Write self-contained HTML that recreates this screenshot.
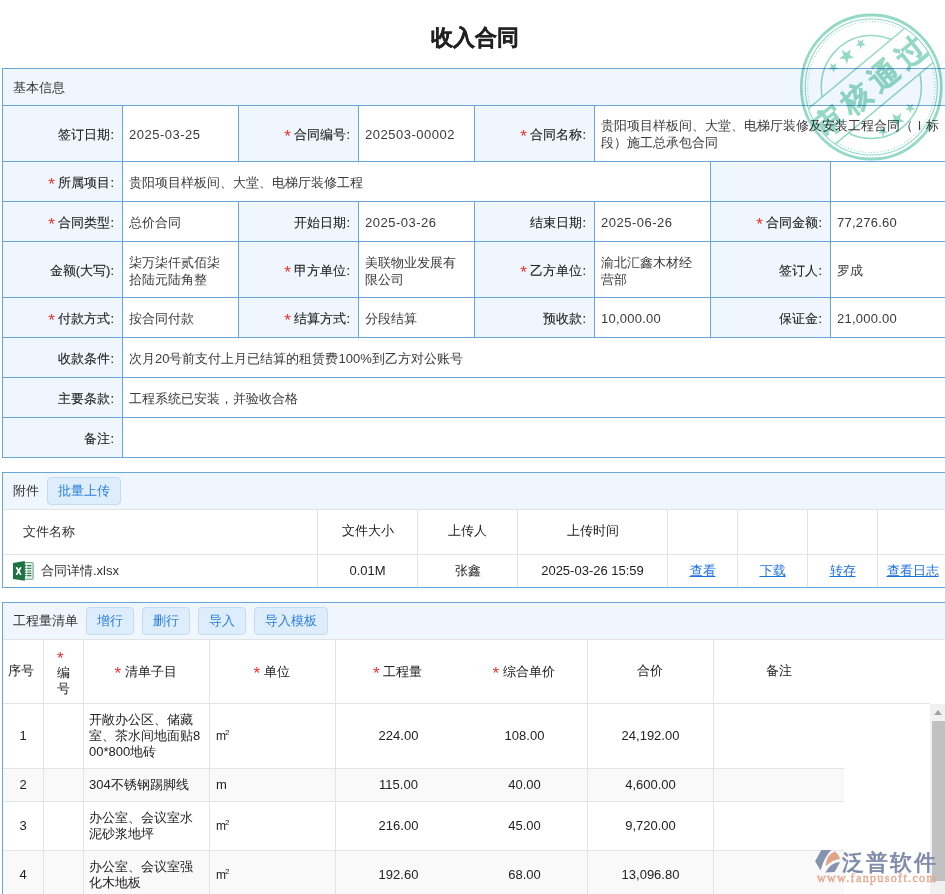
<!DOCTYPE html>
<html><head><meta charset="utf-8">
<style>
*{margin:0;padding:0;box-sizing:border-box}
html,body{width:945px;height:894px;overflow:hidden;background:#fff}
body{position:relative;font-family:"Liberation Sans",sans-serif;font-size:13px;color:#333}
.a{position:absolute;white-space:nowrap}
.hl{position:absolute;height:1px;background:#66a6d9}
.vl{position:absolute;width:1px;background:#66a6d9}
.gh{position:absolute;height:1px;background:#e3e3e3}
.gv{position:absolute;width:1px;background:#e3e3e3}
.bg{position:absolute;background:#eff6fe}
.lb{position:absolute;text-align:right;color:#222;-webkit-text-stroke:0.1px #222;line-height:17px;white-space:nowrap}
.vv{position:absolute;color:#3a3a3a;line-height:17px;white-space:nowrap}
.r{color:#f03030;-webkit-text-stroke:0;font-size:17px;position:relative;top:3px;line-height:10px}
.btn{position:absolute;height:28px;border:1px solid #c3dcf2;background:#deedfb;border-radius:4px;color:#2d7fdc;line-height:25px;text-align:center}
.th{position:absolute;text-align:center;color:#222;line-height:16px;white-space:nowrap}
.td{position:absolute;color:#222;line-height:16px;white-space:nowrap}
a{color:#1d6fdc;text-decoration:underline}
</style></head><body>

<div class="a" style="left:0;width:949px;top:23px;text-align:center;font-size:22px;font-weight:bold;color:#222;line-height:30px;-webkit-text-stroke:0.3px #222">收入合同</div>

<!-- PANEL 1 -->
<div class="bg" style="left:2px;top:68px;width:960px;height:390px;background:#fff"></div>
<div class="bg" style="left:3px;top:69px;width:960px;height:36px"></div>
<div class="bg" style="left:3px;top:106px;width:119px;height:351px"></div>
<div class="bg" style="left:239px;top:106px;width:119px;height:55px"></div>
<div class="bg" style="left:475px;top:106px;width:119px;height:55px"></div>
<div class="bg" style="left:711px;top:162px;width:119px;height:39px"></div>
<div class="bg" style="left:239px;top:202px;width:119px;height:136px"></div>
<div class="bg" style="left:475px;top:202px;width:119px;height:136px"></div>
<div class="bg" style="left:711px;top:202px;width:119px;height:136px"></div>

<div class="hl" style="left:2px;top:68px;width:960px"></div>
<div class="hl" style="left:2px;top:105px;width:960px"></div>
<div class="hl" style="left:2px;top:161px;width:960px"></div>
<div class="hl" style="left:2px;top:201px;width:960px"></div>
<div class="hl" style="left:2px;top:241px;width:960px"></div>
<div class="hl" style="left:2px;top:297px;width:960px"></div>
<div class="hl" style="left:2px;top:337px;width:960px"></div>
<div class="hl" style="left:2px;top:377px;width:960px"></div>
<div class="hl" style="left:2px;top:417px;width:960px"></div>
<div class="hl" style="left:2px;top:457px;width:960px"></div>
<div class="vl" style="left:2px;top:68px;height:390px"></div>
<div class="vl" style="left:122px;top:105px;height:352px"></div>
<div class="vl" style="left:238px;top:105px;height:56px"></div>
<div class="vl" style="left:358px;top:105px;height:56px"></div>
<div class="vl" style="left:474px;top:105px;height:56px"></div>
<div class="vl" style="left:594px;top:105px;height:56px"></div>
<div class="vl" style="left:710px;top:161px;height:40px"></div>
<div class="vl" style="left:830px;top:161px;height:40px"></div>
<div class="vl" style="left:238px;top:201px;height:136px"></div>
<div class="vl" style="left:358px;top:201px;height:136px"></div>
<div class="vl" style="left:474px;top:201px;height:136px"></div>
<div class="vl" style="left:594px;top:201px;height:136px"></div>
<div class="vl" style="left:710px;top:201px;height:136px"></div>
<div class="vl" style="left:830px;top:201px;height:136px"></div>

<div class="a" style="left:13px;top:79px;line-height:17px">基本信息</div>

<!-- row1 -->
<div class="lb" style="left:3px;width:111px;top:126px">签订日期:</div>
<div class="vv" style="left:129px;top:126px;letter-spacing:0.5px">2025-03-25</div>
<div class="lb" style="left:239px;width:111px;top:126px"><span class="r">*</span> 合同编号:</div>
<div class="vv" style="left:365px;top:126px;letter-spacing:0.5px">202503-00002</div>
<div class="lb" style="left:475px;width:111px;top:126px"><span class="r">*</span> 合同名称:</div>
<div class="vv" style="left:601px;top:117px">贵阳项目样板间、大堂、电梯厅装修及安装工程合同（Ｉ标<br>段）施工总承包合同</div>
<!-- row2 -->
<div class="lb" style="left:3px;width:111px;top:174px"><span class="r">*</span> 所属项目:</div>
<div class="vv" style="left:129px;top:174px">贵阳项目样板间、大堂、电梯厅装修工程</div>
<!-- row3 -->
<div class="lb" style="left:3px;width:111px;top:214px"><span class="r">*</span> 合同类型:</div>
<div class="vv" style="left:129px;top:214px">总价合同</div>
<div class="lb" style="left:239px;width:111px;top:214px">开始日期:</div>
<div class="vv" style="left:365px;top:214px;letter-spacing:0.5px">2025-03-26</div>
<div class="lb" style="left:475px;width:111px;top:214px">结束日期:</div>
<div class="vv" style="left:601px;top:214px;letter-spacing:0.5px">2025-06-26</div>
<div class="lb" style="left:711px;width:111px;top:214px"><span class="r">*</span> 合同金额:</div>
<div class="vv" style="left:837px;top:214px;letter-spacing:0.25px">77,276.60</div>
<!-- row4 -->
<div class="lb" style="left:3px;width:111px;top:262px">金额(大写):</div>
<div class="vv" style="left:129px;top:254px">柒万柒仟贰佰柒<br>拾陆元陆角整</div>
<div class="lb" style="left:239px;width:111px;top:262px"><span class="r">*</span> 甲方单位:</div>
<div class="vv" style="left:365px;top:254px">美联物业发展有<br>限公司</div>
<div class="lb" style="left:475px;width:111px;top:262px"><span class="r">*</span> 乙方单位:</div>
<div class="vv" style="left:601px;top:254px">渝北汇鑫木材经<br>营部</div>
<div class="lb" style="left:711px;width:111px;top:262px">签订人:</div>
<div class="vv" style="left:837px;top:262px">罗成</div>
<!-- row5 -->
<div class="lb" style="left:3px;width:111px;top:310px"><span class="r">*</span> 付款方式:</div>
<div class="vv" style="left:129px;top:310px">按合同付款</div>
<div class="lb" style="left:239px;width:111px;top:310px"><span class="r">*</span> 结算方式:</div>
<div class="vv" style="left:365px;top:310px">分段结算</div>
<div class="lb" style="left:475px;width:111px;top:310px">预收款:</div>
<div class="vv" style="left:601px;top:310px;letter-spacing:0.25px">10,000.00</div>
<div class="lb" style="left:711px;width:111px;top:310px">保证金:</div>
<div class="vv" style="left:837px;top:310px;letter-spacing:0.25px">21,000.00</div>
<!-- row6-8 -->
<div class="lb" style="left:3px;width:111px;top:350px">收款条件:</div>
<div class="vv" style="left:129px;top:350px">次月20号前支付上月已结算的租赁费100%到乙方对公账号</div>
<div class="lb" style="left:3px;width:111px;top:390px">主要条款:</div>
<div class="vv" style="left:129px;top:390px">工程系统已安装，并验收合格</div>
<div class="lb" style="left:3px;width:111px;top:430px">备注:</div>

<!-- PANEL 2 -->
<div class="bg" style="left:3px;top:473px;width:960px;height:36px"></div>
<div class="gh" style="left:3px;top:509px;width:960px"></div>
<div class="gh" style="left:3px;top:554px;width:960px"></div>
<div class="hl" style="left:2px;top:472px;width:960px"></div>
<div class="hl" style="left:2px;top:587px;width:960px"></div>
<div class="vl" style="left:2px;top:472px;height:116px"></div>
<div class="gv" style="left:317px;top:510px;height:77px"></div>
<div class="gv" style="left:417px;top:510px;height:77px"></div>
<div class="gv" style="left:517px;top:510px;height:77px"></div>
<div class="gv" style="left:667px;top:510px;height:77px"></div>
<div class="gv" style="left:737px;top:510px;height:77px"></div>
<div class="gv" style="left:807px;top:510px;height:77px"></div>
<div class="gv" style="left:877px;top:510px;height:77px"></div>
<div class="a" style="left:13px;top:482px;line-height:17px">附件</div>
<div class="btn" style="left:47px;top:477px;width:74px">批量上传</div>
<div class="a" style="left:23px;top:523px;line-height:17px">文件名称</div>
<div class="th" style="left:318px;width:99px;top:523px">文件大小</div>
<div class="th" style="left:418px;width:99px;top:523px">上传人</div>
<div class="th" style="left:518px;width:149px;top:523px">上传时间</div>
<svg class="a" style="left:13px;top:561px" width="21" height="21" viewBox="0 0 21 21">
<rect x="11.5" y="1.6" width="8.6" height="16.6" rx="0.6" fill="#e8f1eb" stroke="#4f9a6e" stroke-width="0.9"/>
<path d="M12 4.6h6.3M12 7.4h6.3M12 10h6.3M12 12.3h6.3M12 14.6h6.3" stroke="#2f7d50" stroke-width="1.2"/>
<path d="M13.7 2.5v15" stroke="#fff" stroke-width="0.9"/>
<path d="M0 1.9L11.8 0V19.8L0 18Z" fill="#1f7244"/>
<path d="M3.4 6.2L7.9 13.9M7.9 6.2L3.4 13.9" stroke="#fff" stroke-width="1.7" fill="none"/>
</svg>
<div class="a" style="left:41px;top:562px;line-height:17px;color:#333">合同详情.xlsx</div>
<div class="th" style="left:318px;width:99px;top:563px">0.01M</div>
<div class="th" style="left:418px;width:99px;top:563px">张鑫</div>
<div class="th" style="left:518px;width:149px;top:563px">2025-03-26 15:59</div>
<div class="th" style="left:668px;width:69px;top:563px"><a>查看</a></div>
<div class="th" style="left:738px;width:69px;top:563px"><a>下载</a></div>
<div class="th" style="left:808px;width:69px;top:563px"><a>转存</a></div>
<div class="th" style="left:878px;width:69px;top:563px"><a>查看日志</a></div>

<!-- PANEL 3 -->
<div class="bg" style="left:3px;top:603px;width:960px;height:36px"></div>
<div class="hl" style="left:2px;top:602px;width:960px"></div>
<div class="gh" style="left:3px;top:639px;width:960px"></div>
<div class="vl" style="left:2px;top:602px;height:300px"></div>
<div class="a" style="left:13px;top:612px;line-height:17px">工程量清单</div>
<div class="btn" style="left:86px;top:607px;width:48px">增行</div>
<div class="btn" style="left:142px;top:607px;width:48px">删行</div>
<div class="btn" style="left:198px;top:607px;width:48px">导入</div>
<div class="btn" style="left:254px;top:607px;width:74px">导入模板</div>

<!-- table3 -->
<div class="gh" style="left:3px;top:703px;width:927px"></div>
<div class="bg" style="left:3px;top:769px;width:841px;height:32px;background:#f9f9f9"></div>
<div class="bg" style="left:3px;top:851px;width:841px;height:50px;background:#f9f9f9"></div>
<div class="gh" style="left:3px;top:768px;width:841px"></div>
<div class="gh" style="left:3px;top:801px;width:841px"></div>
<div class="gh" style="left:3px;top:850px;width:841px"></div>
<div class="gv" style="left:43px;top:640px;height:260px"></div>
<div class="gv" style="left:83px;top:640px;height:260px"></div>
<div class="gv" style="left:209px;top:640px;height:260px"></div>
<div class="gv" style="left:335px;top:640px;height:260px"></div>
<div class="gv" style="left:587px;top:640px;height:260px"></div>
<div class="gv" style="left:713px;top:640px;height:260px"></div>

<div class="th" style="left:1px;width:40px;top:663px">序号</div>
<div class="td" style="left:57px;top:649px;line-height:16px"><span class="r" style="top:3px">*</span><br>编<br>号</div>
<div class="th" style="left:83px;width:125px;top:664px"><span class="r">*</span> 清单子目</div>
<div class="th" style="left:209px;width:125px;top:664px"><span class="r">*</span> 单位</div>
<div class="th" style="left:335px;width:125px;top:664px"><span class="r">*</span> 工程量</div>
<div class="th" style="left:461px;width:125px;top:664px"><span class="r">*</span> 综合单价</div>
<div class="th" style="left:587px;width:125px;top:663px">合价</div>
<div class="th" style="left:714px;width:130px;top:663px">备注</div>

<!-- rows -->
<div class="th" style="left:3px;width:40px;top:728px">1</div>
<div class="td" style="left:89px;top:712px">开敞办公区、储藏<br>室、茶水间地面贴8<br>00*800地砖</div>
<div class="td" style="left:216px;top:728px"><span style="font-size:12px">m</span><span style="font-size:8px;position:relative;top:-5px;left:-1px">2</span></div>
<div class="th" style="left:336px;width:125px;top:728px">224.00</div>
<div class="th" style="left:462px;width:125px;top:728px">108.00</div>
<div class="th" style="left:588px;width:125px;top:728px">24,192.00</div>

<div class="th" style="left:3px;width:40px;top:777px">2</div>
<div class="td" style="left:89px;top:777px">304不锈钢踢脚线</div>
<div class="td" style="left:216px;top:777px">m</div>
<div class="th" style="left:336px;width:125px;top:777px">115.00</div>
<div class="th" style="left:462px;width:125px;top:777px">40.00</div>
<div class="th" style="left:588px;width:125px;top:777px">4,600.00</div>

<div class="th" style="left:3px;width:40px;top:818px">3</div>
<div class="td" style="left:89px;top:810px">办公室、会议室水<br>泥砂浆地坪</div>
<div class="td" style="left:216px;top:818px"><span style="font-size:12px">m</span><span style="font-size:8px;position:relative;top:-5px;left:-1px">2</span></div>
<div class="th" style="left:336px;width:125px;top:818px">216.00</div>
<div class="th" style="left:462px;width:125px;top:818px">45.00</div>
<div class="th" style="left:588px;width:125px;top:818px">9,720.00</div>

<div class="th" style="left:3px;width:40px;top:867px">4</div>
<div class="td" style="left:89px;top:859px">办公室、会议室强<br>化木地板</div>
<div class="td" style="left:216px;top:867px"><span style="font-size:12px">m</span><span style="font-size:8px;position:relative;top:-5px;left:-1px">2</span></div>
<div class="th" style="left:336px;width:125px;top:867px">192.60</div>
<div class="th" style="left:462px;width:125px;top:867px">68.00</div>
<div class="th" style="left:588px;width:125px;top:867px">13,096.80</div>

<!-- scrollbar -->
<div class="a" style="left:930px;top:704px;width:15px;height:190px;background:#f1f1f1"></div>
<div class="a" style="left:932px;top:721px;width:13px;height:160px;background:#c1c1c1"></div>
<svg class="a" style="left:933px;top:709px" width="10" height="7"><path d="M1 6L5 1L9 6Z" fill="#a3a3a3"/></svg>


<!-- STAMP -->
<svg class="a" style="left:792px;top:6px;mix-blend-mode:multiply" width="160" height="162" viewBox="792 6 160 162">
<defs>
<clipPath id="nb"><circle cx="872" cy="87" r="68.5"/></clipPath>
<mask id="band">
<rect x="792" y="6" width="160" height="162" fill="#fff"/>
<g transform="rotate(-39 872 87)"><rect x="790" y="63" width="170" height="45" fill="#000"/></g>
</mask>
</defs>
<g transform="translate(871.3 87) scale(0.972 1) translate(-872 -87)">
<g fill="none" stroke="#94d9c4">
<circle cx="872" cy="87" r="72" stroke-width="2.8"/>
<circle cx="872" cy="87" r="68" stroke-width="1.2"/>
<g mask="url(#band)">
<circle cx="872" cy="87" r="65.5" stroke-width="1.1" stroke-dasharray="1 2"/>
<circle cx="872" cy="87" r="51.5" stroke-width="1.6"/>
</g>
<g clip-path="url(#nb)"><g transform="rotate(-39 872 87)">
<line x1="800" y1="63" x2="944" y2="63" stroke-width="1.5"/>
<line x1="800" y1="108" x2="944" y2="108" stroke-width="1.5"/>
</g></g>
</g>
<g fill="#94d9c4">
<g transform="rotate(-39 872 87)">
<text x="874" y="96.5" text-anchor="middle" font-size="30" font-weight="bold" letter-spacing="6" stroke="#94d9c4" stroke-width="0.5" font-family="Liberation Sans">审核通过</text>
</g>
<polygon points="857.54,39.43 860.88,41.50 864.00,39.09 863.05,42.91 866.31,45.12 862.38,45.41 861.29,49.19 859.80,45.55 855.87,45.67 858.87,43.13"/>
<polygon points="841.47,49.78 846.33,52.80 850.86,49.29 849.49,54.85 854.23,58.07 848.51,58.49 846.92,63.99 844.76,58.68 839.03,58.87 843.41,55.17"/>
<polygon points="829.54,63.23 832.88,65.30 836.00,62.89 835.05,66.71 838.31,68.92 834.38,69.21 833.29,72.99 831.80,69.35 827.87,69.47 830.87,66.93"/>
<polygon points="880.54,127.23 883.88,129.30 887.00,126.89 886.05,130.71 889.31,132.92 885.38,133.21 884.29,136.99 882.80,133.35 878.87,133.47 881.87,130.93"/>
<polygon points="893.47,113.58 898.33,116.60 902.86,113.09 901.49,118.65 906.23,121.87 900.51,122.29 898.92,127.79 896.76,122.48 891.03,122.67 895.41,118.97"/>
<polygon points="908.54,103.73 911.88,105.80 915.00,103.39 914.05,107.21 917.31,109.42 913.38,109.71 912.29,113.49 910.80,109.85 906.87,109.97 909.87,107.43"/>
</g>
</g>
</svg>

<!-- LOGO -->
<svg class="a" style="left:810px;top:846px" width="135" height="48" viewBox="810 846 135 48">
<path d="M821.4 850.1L831.2 850.1Q824 857.7 820.6 870.4L815.1 861.3Z" fill="#8593ae"/>
<path d="M825.7 866.2Q826 855 834.6 851.4Q838.5 853.5 840 859Q833 859.5 825.7 866.2Z" fill="#e2a489"/>
<path d="M825.3 872.5L834.6 872.1L840.1 862Q831 862.3 825.3 872.5Z" fill="#8593ae"/>
<text x="842" y="869.5" font-size="22" fill="#7d89a8" stroke="#7d89a8" stroke-width="0.7" font-family="Liberation Sans" letter-spacing="2">泛普软件</text>
<text x="817" y="882" font-size="12" fill="#e6a68c" stroke="#e6a68c" stroke-width="0.35" font-family="Liberation Serif" letter-spacing="1.35">www.fanpusoft.com</text>
</svg>
</body></html>
